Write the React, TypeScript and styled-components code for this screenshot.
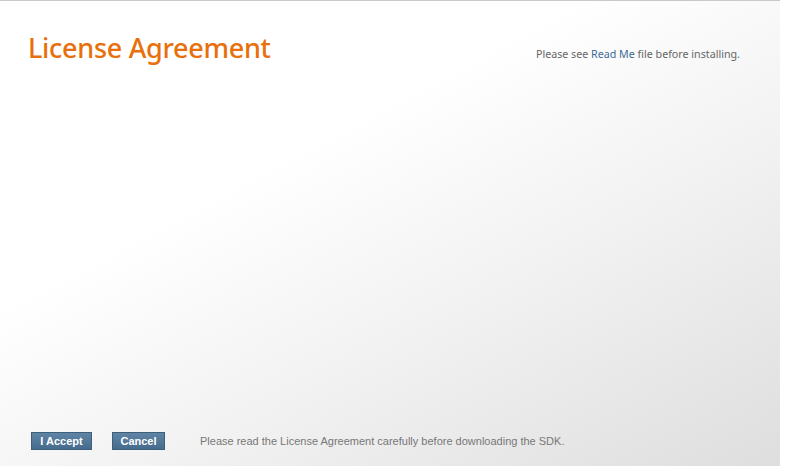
import React from "react";
import styled, { createGlobalStyle } from "styled-components";

const Global = createGlobalStyle`
  html, body { margin: 0; padding: 0; background: #ffffff; }
  #root { width: 790px; height: 466px; }
`;

const Page = styled.div`
  width: 790px;
  height: 466px;
  display: flex;
  background: #ffffff;
`;

const Panel = styled.div`
  width: 780px;
  height: 466px;
  box-sizing: border-box;
  border-top: 1px solid #c9c9c9;
  background: linear-gradient(152deg, #ffffff 0%, #ffffff 35%, #f2f2f2 62%, #dedede 100%);
  display: flex;
  flex-direction: column;
  justify-content: space-between;
`;

const Header = styled.div`
  display: flex;
  align-items: flex-start;
  justify-content: space-between;
  padding: 29px 40px 0 28px;
`;

const Title = styled.h1`
  margin: 0;
  font-family: "Noto Sans", "Open Sans", sans-serif;
  font-weight: 500;
  font-size: 27px;
  line-height: 36px;
  color: #e8700c;
  letter-spacing: -0.3px;
`;

const Note = styled.p`
  margin: 17px 0 0;
  font-family: "Noto Sans", "Open Sans", sans-serif;
  font-size: 10.7px;
  line-height: 14px;
  color: #666666;
`;

const Link = styled.a`
  color: #3b6c96;
  text-decoration: none;
  cursor: pointer;
`;

const Footer = styled.div`
  display: flex;
  align-items: center;
  padding: 0 0 16px 31px;
`;

const Button = styled.button<{ $gap: number; $width: number }>`
  box-sizing: border-box;
  width: ${(p) => p.$width}px;
  height: 18px;
  padding: 0;
  margin-right: ${(p) => p.$gap}px;
  border: 1px solid #3d5f7c;
  background: linear-gradient(#5f84a4, #466c8d);
  color: #ffffff;
  font-family: "Liberation Sans", Arial, sans-serif;
  font-weight: 700;
  font-size: 11px;
  line-height: 16px;
  text-align: center;
  cursor: pointer;
`;

const Hint = styled.span`
  font-family: "Liberation Sans", Arial, sans-serif;
  font-size: 11px;
  color: #777777;
`;

export default function App() {
  return (
    <>
      <Global />
      <Page>
        <Panel>
          <Header>
            <Title>License Agreement</Title>
            <Note>
              Please see <Link>Read Me</Link> file before installing.
            </Note>
          </Header>
          <Footer>
            <Button $width={61} $gap={20}>I Accept</Button>
            <Button $width={53} $gap={35}>Cancel</Button>
            <Hint>Please read the License Agreement carefully before downloading the SDK.</Hint>
          </Footer>
        </Panel>
      </Page>
    </>
  );
}
